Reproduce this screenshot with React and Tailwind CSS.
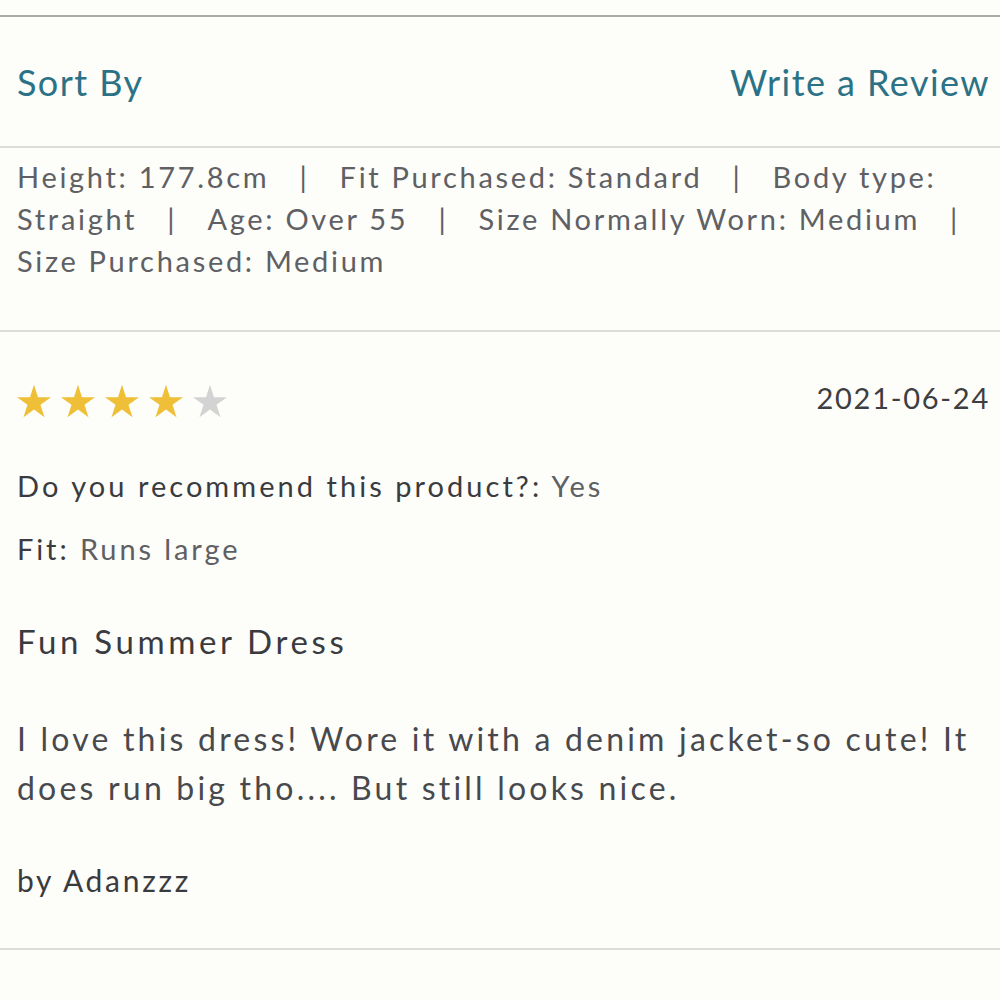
import { Fragment } from 'react'

const details = [
  'Height: 177.8cm',
  'Fit Purchased: Standard',
  'Body type: Straight',
  'Age: Over 55',
  'Size Normally Worn: Medium',
  'Size Purchased: Medium',
]

function StarIcon({ filled }) {
  return (
    <svg viewBox="0 0 24 24" className={`w-[34px] h-[34px] ${filled ? 'text-[#f0bf38]' : 'text-[#d3d3d3]'}`}>
      <polygon
        fill="currentColor"
        points="12,0.6 14.83,9.31 23.98,9.31 16.57,14.69 19.41,23.39 12,18.01 4.59,23.39 7.43,14.69 0.02,9.31 9.17,9.31"
      />
    </svg>
  )
}

export default function App() {
  return (
    <div
      className="min-h-screen bg-[#fdfdf9] pt-[15px]"
      style={{ fontFamily: 'Lato, "Noto Sans", sans-serif' }}
    >
      <div className="border-t-2 border-[#a9a9a9]" />
      <div className="flex items-center justify-between pl-[17px] pr-[10px] h-[129px] text-[36px] tracking-[0.04em] text-[#2b7286]">
        <span>Sort By</span>
        <span>Write a Review</span>
      </div>
      <div className="border-t-2 border-[#dcdcdc]" />

      <p className="pl-[17px] pr-[10px] pt-[8px] pb-[48px] text-[29px] leading-[42px] tracking-[0.093em] text-[#5e6064] [word-spacing:0px]">
        {details.map((d, i) => (
          <Fragment key={d}>
            {d}
            {i < details.length - 1 && <span className="[word-spacing:20px]"> | </span>}
          </Fragment>
        ))}
      </p>
      <div className="border-t-2 border-[#dcdcdc]" />

      <div className="pl-[17px] pr-[10px] pt-[49px]">
        <div className="flex items-center justify-between h-[40px]">
          <div className="flex items-center gap-[10px]">
            {[1, 2, 3, 4, 5].map((n) => (
              <StarIcon key={n} filled={n <= 4} />
            ))}
          </div>
          <span className="text-[29px] leading-[40px] tracking-[0.06em] text-[#3d3e42] -mt-[7px]">2021-06-24</span>
        </div>

        <p className="mt-[45px] text-[29px] leading-[40px] tracking-[0.105em] text-[#3a3b3f]">
          Do you recommend this product?: <span className="text-[#5e6064]">Yes</span>
        </p>
        <p className="mt-[23px] text-[29px] leading-[40px] tracking-[0.1em] text-[#3a3b3f]">
          Fit: <span className="text-[#5e6064]">Runs large</span>
        </p>

        <h2 className="mt-[50px] text-[33px] leading-[44px] tracking-[0.11em] text-[#3a3b3f]">Fun Summer Dress</h2>

        <p className="mt-[51px] text-[32px] leading-[49px] tracking-[0.1em] text-[#48494d]">
          I love this dress! Wore it with a denim jacket-so cute! It does run big tho.... But still looks nice.
        </p>

        <p className="mt-[48px] text-[30px] leading-[40px] tracking-[0.09em] text-[#3a3b3f]">by Adanzzz</p>
      </div>
      <div className="mt-[48px] border-t-2 border-[#dcdcdc]" />
    </div>
  )
}
